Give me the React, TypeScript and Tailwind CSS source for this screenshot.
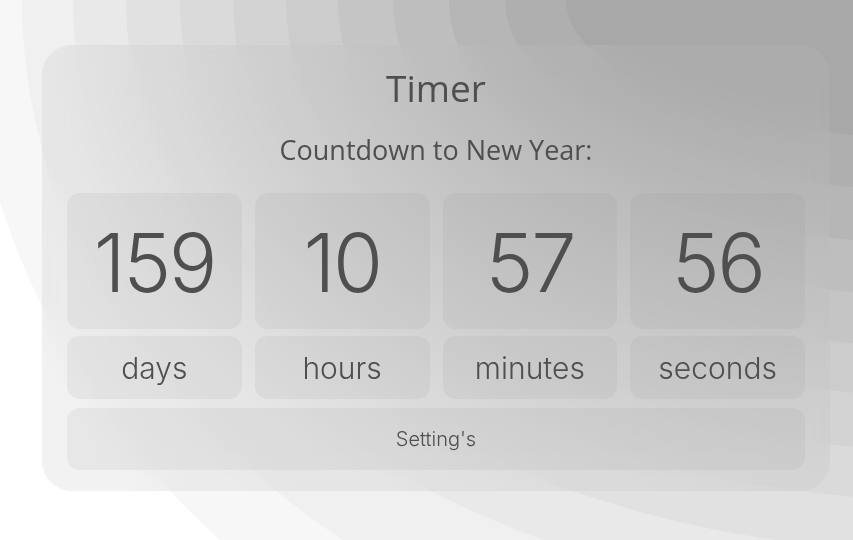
const rings = [
  { a: 984, b: 810, fill: '#f7f7f7' },
  { a: 931, b: 715, fill: '#f0f0f0' },
  { a: 880, b: 610, fill: '#e9e9e9' },
  { a: 827, b: 553, fill: '#e1e1e1' },
  { a: 773, b: 501, fill: '#dadada' },
  { a: 720, b: 451, fill: '#d3d3d3' },
  { a: 667, b: 397, fill: '#cccccc' },
  { a: 615, b: 348, fill: '#c5c5c5' },
  { a: 560, b: 297, fill: '#bebebe' },
  { a: 504, b: 245, fill: '#b6b6b6' },
  { a: 448, b: 192, fill: '#afafaf' },
  { a: 387, b: 140, fill: '#a8a8a8' }
]

const units = [
  { value: '159', label: 'days' },
  { value: '10', label: 'hours' },
  { value: '57', label: 'minutes' },
  { value: '56', label: 'seconds' }
]

function Backdrop() {
  return (
    <svg
      className="absolute inset-0"
      width="853"
      height="540"
      viewBox="0 0 853 540"
    >
      <rect width="853" height="540" fill="#ffffff" />
      {rings.map(ring => (
        <ellipse
          key={ring.a}
          cx="953"
          cy="0"
          rx={ring.a}
          ry={ring.b}
          fill={ring.fill}
        />
      ))}
    </svg>
  )
}

export default function App() {
  return (
    <div className="relative h-[540px] w-full overflow-hidden bg-white pl-[42px] pt-[45px]">
      <Backdrop />

      <div className="relative w-[788px] rounded-[30px] bg-[rgba(190,190,190,0.2)] px-[25px] pt-[21px] pb-[21px] text-[#4f4f4f] backdrop-blur-lg">
        <h1 className="text-center font-['Open_Sans',sans-serif] text-[37px] leading-[44px] font-normal">
          Timer
        </h1>

        <p className="mt-[23px] text-center font-['Open_Sans',sans-serif] text-[27px] leading-[34px]">
          Countdown to New Year:
        </p>

        <div className="mt-[26px] grid grid-cols-4 gap-x-[13px] font-['Inter',sans-serif]">
          {units.map(unit => (
            <div
              key={unit.label}
              className="flex h-[136px] items-center justify-center rounded-[13px] bg-[rgba(128,128,128,0.1)] pt-[4px]"
            >
              <span className="text-[81px] leading-none font-light tracking-[-0.03em]">
                {unit.value}
              </span>
            </div>
          ))}
        </div>

        <div className="mt-[7px] grid grid-cols-4 gap-x-[13px] font-['Inter',sans-serif]">
          {units.map(unit => (
            <div
              key={unit.label}
              className="flex h-[63px] items-center justify-center rounded-[13px] bg-[rgba(128,128,128,0.1)]"
            >
              <span className="text-[30px] leading-none font-light">
                {unit.label}
              </span>
            </div>
          ))}
        </div>

        <button
          className="mt-[9px] flex h-[62px] w-full items-center justify-center rounded-[13px] bg-[rgba(128,128,128,0.1)] font-['Inter',sans-serif] text-[20px] leading-none font-light"
          type="button"
        >
          Setting's
        </button>
      </div>
    </div>
  )
}
